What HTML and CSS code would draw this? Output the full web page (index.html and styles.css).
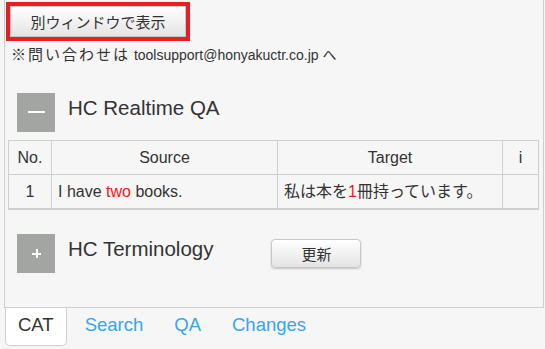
FILE: index.html
```html
<!DOCTYPE html>
<html lang="ja">
<head>
    <meta charset="UTF-8">
    <title>HC Tools</title>
    <link rel="stylesheet" href="styles.css">
</head>
<body>
    <div id="panel">
        <button class="btn btn-window">別ウィンドウで表示</button>
        <p class="notice"><span class="jp">※問い合わせは</span> toolsupport@honyakuctr.co.jp へ</p>

        <div class="section">
            <span class="toggle minus"></span>
            <h2 class="sec-title">HC Realtime QA</h2>
        </div>
        <table class="qa-table">
            <thead>
                <tr>
                    <th class="col-no">No.</th>
                    <th class="col-src">Source</th>
                    <th class="col-tgt">Target</th>
                    <th class="col-i">i</th>
                </tr>
            </thead>
            <tbody>
                <tr>
                    <td class="center">1</td>
                    <td>I have <span class="hl">two</span> books.</td>
                    <td>私は本を<span class="hl">1</span>冊持っています。</td>
                    <td></td>
                </tr>
            </tbody>
        </table>

        <div class="section section-term">
            <span class="toggle plus"></span>
            <h2 class="sec-title">HC Terminology</h2>
            <button class="btn btn-update">更新</button>
        </div>
    </div>

    <ul id="tabs">
        <li class="active">CAT</li>
        <li>Search</li>
        <li>QA</li>
        <li>Changes</li>
    </ul>
</body>
</html>
```

FILE: styles.css
```css
*{
    margin: 0;
    padding: 0;
    box-sizing: border-box;
}
body{
    background: #f6f6f6;
    color: #333;
    font-family: "Liberation Sans", Arial, "Noto Sans CJK JP", sans-serif;
}
#panel{
    width: 540px;
    height: 308px;
    margin-left: 4px;
    border: 1px solid #cfcfcf;
    border-top: none;
    padding-top: 6px;
}
.btn{
    display: block;
    font-family: "Liberation Sans", Arial, "Noto Sans CJK JP", sans-serif;
    font-size: 15px;
    color: #333;
    background: linear-gradient(#ffffff, #e4e4e4);
    border: 1px solid #c6c6c6;
    border-radius: 3px;
    box-shadow: 0 1px 2px rgba(0,0,0,0.2);
    cursor: pointer;
}
.btn-window{
    width: 176px;
    height: 31px;
    margin-left: 5px;
    outline: 4px solid #ea1c24;
    border-radius: 0;
}
.notice{
    font-size: 14px;
    line-height: 18px;
    margin: 9px 0 0 6px;
}
.notice .jp{
    font-size: 15px;
    letter-spacing: 2px;
}
.section{
    display: flex;
    align-items: flex-start;
    margin: 29px 0 0 12px;
}
.toggle{
    position: relative;
    width: 38px;
    height: 39px;
    background: #a2a5a2;
}
.toggle::before{
    content: "";
    position: absolute;
    left: 11px;
    top: 18px;
    width: 17px;
    height: 2px;
    background: #fff;
}
.plus::before{
    left: 15px;
    top: 19px;
    width: 9px;
}
.plus::after{
    content: "";
    position: absolute;
    left: 18.5px;
    top: 15px;
    width: 2px;
    height: 9px;
    background: #fff;
}
.sec-title{
    font-size: 20.5px;
    font-weight: normal;
    line-height: 24px;
    margin: 3px 0 0 13px;
}
.qa-table{
    width: 531px;
    margin: 8px 0 0 3px;
    border-collapse: collapse;
    border: 1px solid #cfcfcf;
    font-size: 16px;
}
.qa-table th,
.qa-table td{
    border: 1px solid #cfcfcf;
    padding: 6px 6px;
    line-height: 21px;
    text-align: left;
    font-weight: normal;
}
.qa-table th{
    text-align: center;
}
.qa-table tbody tr td{
    border-bottom: 2px solid #cfcfcf;
}
.qa-table .center{
    text-align: center;
}
.col-no{ width: 43px; }
.col-src{ width: 226px; }
.col-tgt{ width: 225px; }
.hl{
    color: #f01a12;
}
.section-term{
    margin-top: 24px;
}
.btn-update{
    width: 90px;
    height: 29px;
    margin: 5px 0 0 58px;
    border-radius: 4px;
}
#tabs{
    list-style: none;
    display: flex;
    gap: 5px;
    margin-left: 5px;
}
#tabs li{
    padding: 4px 12px 7px;
    line-height: 26px;
    font-size: 18.5px;
    color: #33a6ef;
    border: 1px solid transparent;
    border-top: none;
    cursor: pointer;
}
#tabs .active{
    color: #333;
    background: #fff;
    border-color: #cfcfcf;
    border-radius: 0 0 5px 5px;
}
```
